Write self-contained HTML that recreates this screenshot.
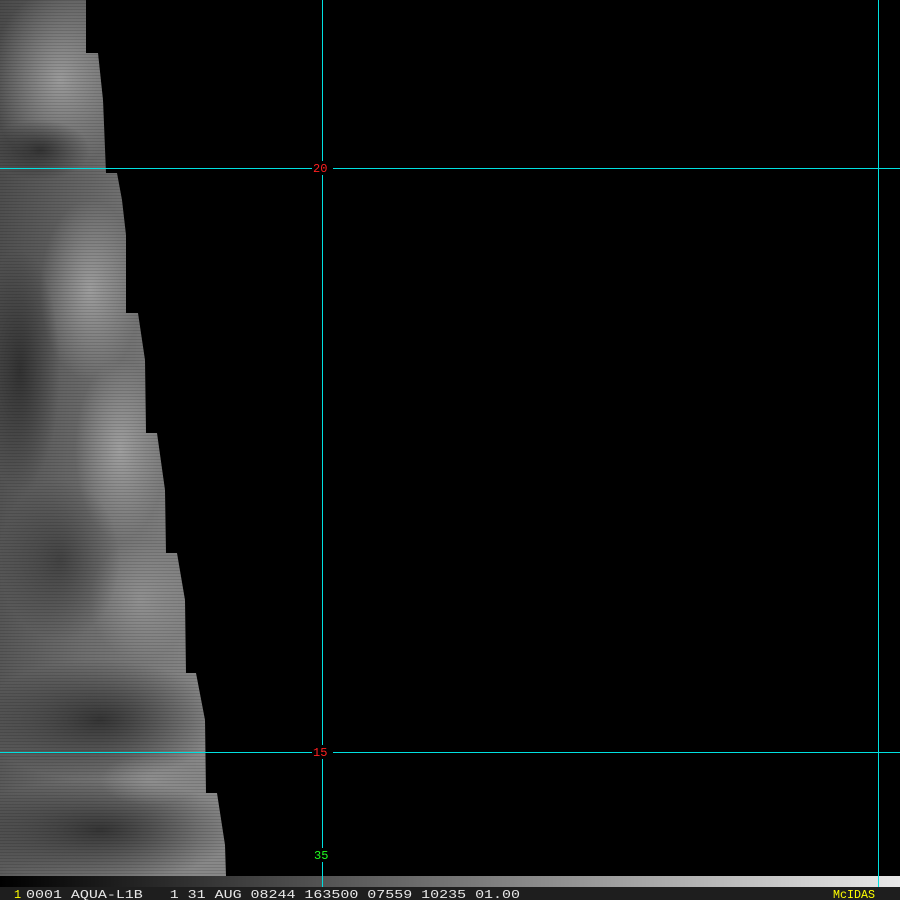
<!DOCTYPE html>
<html><head><meta charset="utf-8"><style>
html,body{margin:0;padding:0;background:#000;width:900px;height:900px;overflow:hidden}
svg{display:block}
text{white-space:pre}
</style></head><body>
<svg width="900" height="900" xmlns="http://www.w3.org/2000/svg">
<defs>
<clipPath id="c"><polygon points="0,0 86,0 86,53 98,53 103,100 106,173 117,173 122,200 126,235 126,313 138,313 145,360 146,433 157,433 165,490 166,553 177,553 185,600 186,673 196,673 205,720 206,793 217,793 225,845 226,876 0,876"/></clipPath>
<linearGradient id="g1" x1="0" y1="0" x2="1" y2="0.25">
<stop offset="0" stop-color="#4a4a4a"/><stop offset="0.5" stop-color="#6e6e6e"/><stop offset="1" stop-color="#888"/></linearGradient>
<radialGradient id="r1" cx="0.5" cy="0.5" r="0.5"><stop offset="0" stop-color="#aaa" stop-opacity="0.8"/><stop offset="1" stop-color="#aaa" stop-opacity="0"/></radialGradient>
<radialGradient id="r2" cx="0.5" cy="0.5" r="0.5"><stop offset="0" stop-color="#2e2e2e" stop-opacity="0.9"/><stop offset="1" stop-color="#2e2e2e" stop-opacity="0"/></radialGradient>
<pattern id="st" width="6" height="3" patternUnits="userSpaceOnUse"><rect width="6" height="1" fill="#000" opacity="0.12"/></pattern>
</defs>
<g clip-path="url(#c)">
<rect width="240" height="880" fill="url(#g1)"/>
<ellipse cx="60" cy="80" rx="70" ry="90" fill="url(#r1)"/>
<ellipse cx="90" cy="290" rx="50" ry="90" fill="url(#r1)"/>
<ellipse cx="120" cy="450" rx="45" ry="90" fill="url(#r1)"/>
<ellipse cx="140" cy="600" rx="50" ry="60" fill="url(#r1)" opacity="0.6"/>
<ellipse cx="20" cy="370" rx="40" ry="120" fill="url(#r2)"/>
<ellipse cx="40" cy="150" rx="50" ry="30" fill="url(#r2)"/>
<ellipse cx="60" cy="560" rx="60" ry="80" fill="url(#r2)" opacity="0.7"/>
<ellipse cx="100" cy="720" rx="120" ry="60" fill="url(#r2)"/>
<ellipse cx="100" cy="830" rx="140" ry="50" fill="url(#r2)"/>
<ellipse cx="150" cy="780" rx="50" ry="25" fill="url(#r1)" opacity="0.5"/>
<rect width="240" height="880" fill="url(#st)"/>
</g>
<g stroke="#00e0e0" stroke-width="1">
<line x1="322.5" y1="0" x2="322.5" y2="900"/>
<line x1="878.5" y1="0" x2="878.5" y2="900"/>
<line x1="0" y1="168.5" x2="900" y2="168.5"/>
<line x1="0" y1="752.5" x2="900" y2="752.5"/>
</g>
<rect x="312" y="161" width="21" height="14" fill="#000"/>
<rect x="312" y="745" width="21" height="14" fill="#000"/>
<rect x="313" y="848" width="20" height="14" fill="#000"/>
<g font-family="Liberation Mono, monospace" font-size="12">
<text x="313" y="172" fill="#ff2020">20</text>
<text x="313" y="756" fill="#ff2020">15</text>
<text x="314" y="859" fill="#20ff20">35</text>
</g>
<defs><linearGradient id="bar" x1="0" x2="1"><stop offset="0" stop-color="#000"/><stop offset="1" stop-color="#e8e8e8"/></linearGradient></defs>
<rect x="0" y="876" width="900" height="11" fill="url(#bar)"/>
<line x1="322.5" y1="876" x2="322.5" y2="887" stroke="#00e0e0"/>
<line x1="878.5" y1="876" x2="878.5" y2="887" stroke="#00e0e0"/>
<rect x="0" y="887" width="900" height="13" fill="#1e1e1e"/>
<g font-family="Liberation Mono, monospace" font-size="12">
<text x="14" y="898" fill="#ffff00">1</text>
<text x="26" y="898" fill="#e8e8e8" xml:space="preserve" textLength="494" lengthAdjust="spacingAndGlyphs">0001 AQUA-L1B   1 31 AUG 08244 163500 07559 10235 01.00</text>
<text x="833" y="898" fill="#ffff00" textLength="42" lengthAdjust="spacingAndGlyphs">McIDAS</text>
</g>
</svg>
</body></html>
